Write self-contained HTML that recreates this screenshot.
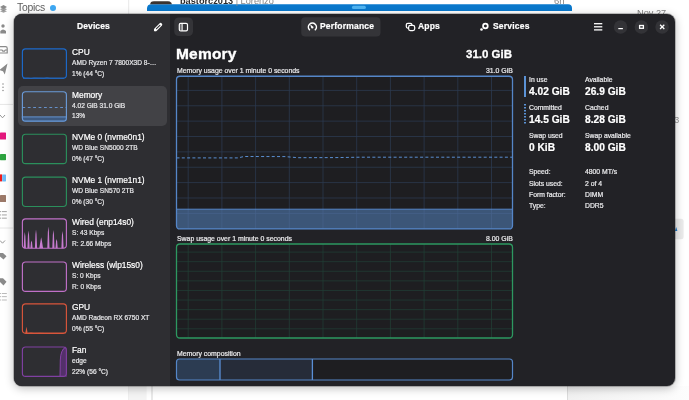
<!DOCTYPE html>
<html><head><meta charset="utf-8"><style>
html,body{margin:0;padding:0;-webkit-font-smoothing:antialiased;}
.gs{will-change:transform;}
body{width:689px;height:400px;position:relative;overflow:hidden;background:#ffffff;font-family:"Liberation Sans",sans-serif;}
.ov{position:absolute;left:0;top:0;}
.t{will-change:transform;position:absolute;white-space:nowrap;line-height:1;}
#win{position:absolute;left:14px;top:14px;width:661px;height:372px;border-radius:8px;background:#222226;overflow:hidden;box-shadow:0 0 0 1px rgba(0,0,0,0.22),0 2px 10px rgba(0,0,0,0.28);}
#side{position:absolute;left:0;top:0;width:156px;height:372px;background:#2e2e32;}
.nm{will-change:transform;-webkit-text-stroke:0.2px #fff;position:absolute;left:72px;font-size:8.4px;color:#fff;white-space:nowrap;line-height:10px;}
.sb{will-change:transform;-webkit-text-stroke:0.2px #e8e8ea;position:absolute;left:72px;font-size:6.6px;color:#e8e8ea;white-space:nowrap;line-height:8px;}
.lb{will-change:transform;-webkit-text-stroke:0.2px #ececee;position:absolute;font-size:6.8px;color:#ececee;white-space:nowrap;line-height:8px;}
.vl{will-change:transform;-webkit-text-stroke:0.2px #fff;position:absolute;font-size:10.2px;font-weight:bold;color:#fff;white-space:nowrap;line-height:12px;}
.hd{will-change:transform;-webkit-text-stroke:0.2px #fff;letter-spacing:0.2px;position:absolute;font-size:8.5px;font-weight:bold;color:#fff;white-space:nowrap;line-height:10px;}
</style></head><body>
<svg class="ov" width="689" height="400" viewBox="0 0 689 400"><path d="M147 11 L147 8.5 Q147 4.2 151.5 4.2 L568 4.2 Q572 4.2 572 8 L572 11 Z" fill="#0a78cc"/><rect x="351.9" y="5.8" width="14" height="3.2" rx="1.6" fill="#4fb3f0"/><path d="M150 4.2 L151 2 Q152 1.3 154 1.3 L168 1.3 Q170 1.3 171 2.5 L172 4.2 Z" fill="#3a3330"/><line x1="128.7" y1="0" x2="128.7" y2="400" stroke="#e8e8e8" stroke-width="1"/><rect x="128.6" y="386" width="18" height="14" fill="#f4f4f4"/><line x1="152" y1="386" x2="152" y2="400" stroke="#e2e2e2" stroke-width="1.5"/><line x1="567.5" y1="386" x2="567.5" y2="400" stroke="#dcdcdc" stroke-width="1"/><defs><linearGradient id="rg" x1="0" x2="1" y1="0" y2="0"><stop offset="0" stop-color="#f1f1f1"/><stop offset="0.4" stop-color="#f6f6f6"/><stop offset="1" stop-color="#fdfdfd"/></linearGradient></defs><rect x="568" y="386" width="121" height="14" fill="url(#rg)"/><g fill="#8a8a8a"><path d="M0 7 L3.5 5 L7 7 L3.5 9 Z"/><path d="M0 9.3 L3.5 7.3 L7 9.3 L3.5 11.3 Z" opacity="0.8"/><path d="M0 11.3 L3.5 9.8 L7 11.3 L3.5 12.8 Z" opacity="0.8"/></g><g fill="#8a8a8a"><circle cx="3" cy="26" r="1.7"/><path d="M0.3 33.5 L0.3 31 Q3 28 6 31 L6 33.5 Z"/></g><path d="M-1 46.6 L5.6 46.6 Q7.2 46.6 7.2 48.2 L7.2 53 L-1 53 Z M-1 50 L2 50 L2.8 51.2 L4.5 51.2 L5.3 50 L7.2 50" fill="none" stroke="#8a8a8a" stroke-width="1.2"/><path d="M-0.5 70 L7.5 63.5 L4.8 74.5 L3 71.2 Z" fill="#8a8a8a"/><g fill="#8a8a8a"><circle cx="3" cy="84" r="0.75"/><circle cx="3" cy="87.3" r="0.75"/><circle cx="3" cy="90.5" r="0.75"/></g><line x1="0" y1="104.4" x2="13" y2="104.4" stroke="#e6e6e6" stroke-width="1"/><path d="M0 115 L2.5 117.8 L5 115" stroke="#8a8a8a" stroke-width="0.9" fill="none"/><rect x="0" y="132.5" width="6" height="7" rx="0.6" fill="#e3177c"/><rect x="0" y="154" width="6" height="6.2" rx="0.6" fill="#2da33f"/><rect x="0" y="174.4" width="2.2" height="7" fill="#ee1a1a"/><rect x="2.2" y="174.4" width="3.8" height="7" rx="0.6" fill="#6cbaf5"/><rect x="0" y="195" width="6" height="7" rx="0.6" fill="#9b7868"/><g fill="#999"><rect x="0" y="211.2" width="1" height="0.9"/><rect x="1.8" y="211.2" width="5" height="0.9"/><rect x="0" y="214.5" width="1" height="0.9"/><rect x="1.8" y="214.5" width="5" height="0.9"/><rect x="0" y="217.7" width="1" height="0.9"/><rect x="1.8" y="217.7" width="5" height="0.9"/></g><line x1="0" y1="228" x2="13" y2="228" stroke="#e6e6e6" stroke-width="1"/><path d="M0 240.5 L2.5 243.2 L5 240.5" stroke="#8a8a8a" stroke-width="0.9" fill="none"/><path d="M0 253 L3 253 L6.5 256.2 L3.5 259.4 L0 256.5 Z" fill="#8a8a8a"/><path d="M0 278.3 L3 278.3 L6.5 281.8 L3.5 285.4 L0 282 Z" fill="#8a8a8a"/><g fill="#aaa"><rect x="0" y="293" width="1" height="0.8"/><rect x="1.8" y="293" width="5" height="0.8"/><rect x="0" y="296.3" width="1" height="0.8"/><rect x="1.8" y="296.3" width="5" height="0.8"/><rect x="0" y="299.6" width="1" height="0.8"/><rect x="1.8" y="299.6" width="5" height="0.8"/></g><rect x="665" y="218.7" width="18.6" height="20.6" rx="2.5" fill="#ebebeb"/><path d="M675 231 L676.2 227 L677.4 231 Z" fill="#1f7ac8"/></svg>
<div class="t" style="left:17.3px;top:3.2px;font-size:10.4px;letter-spacing:-0.25px;color:#606060;">Topics</div>
<div style="position:absolute;left:49.8px;top:5.1px;width:5.8px;height:5.8px;border-radius:50%;background:#3ea8f3"></div>
<div class="t" style="left:179.5px;top:-3.5px;font-size:9.2px;font-weight:bold;color:#2a2a2a;">bastorcz013 <span style="color:#888;font-weight:normal">| Lorenzo</span></div>
<div class="t" style="left:554px;top:-3.8px;font-size:9.5px;color:#888;">6h</div>
<div class="t" style="left:637px;top:8.6px;font-size:9.2px;color:#808080;">Nov 27</div>
<div class="t" style="left:674px;top:115.2px;font-size:9.5px;color:#999;">3</div>
<div id="win"><div id="side"></div>
<div style="position:absolute;left:3.5px;top:71.8px;width:149.8px;height:40.6px;border-radius:5px;background:#424246"></div>
</div>
<div style="position:absolute;left:0;top:0;width:689px;height:400px;">
<div class="nm" style="top:46.70px">CPU</div><div class="sb" style="top:59.00px">AMD Ryzen 7 7800X3D 8-…</div><div class="sb" style="top:69.50px">1% (44 °C)</div><div class="nm" style="top:89.60px">Memory</div><div class="sb" style="top:101.90px">4.02 GiB 31.0 GiB</div><div class="sb" style="top:112.40px">13%</div><div class="nm" style="top:132.10px">NVMe 0 (nvme0n1)</div><div class="sb" style="top:144.40px">WD Blue SN5000 2TB</div><div class="sb" style="top:154.90px">0% (47 °C)</div><div class="nm" style="top:175.00px">NVMe 1 (nvme1n1)</div><div class="sb" style="top:187.30px">WD Blue SN570 2TB</div><div class="sb" style="top:197.80px">0% (30 °C)</div><div class="nm" style="top:216.70px">Wired (enp14s0)</div><div class="sb" style="top:229.00px">S: 43 Kbps</div><div class="sb" style="top:239.50px">R: 2.66 Mbps</div><div class="nm" style="top:259.90px">Wireless (wlp15s0)</div><div class="sb" style="top:272.20px">S: 0 Kbps</div><div class="sb" style="top:282.70px">R: 0 Kbps</div><div class="nm" style="top:301.80px">GPU</div><div class="sb" style="top:314.10px">AMD Radeon RX 6750 XT</div><div class="sb" style="top:324.60px">0% (55 °C)</div><div class="nm" style="top:344.90px">Fan</div><div class="sb" style="top:357.20px">edge</div><div class="sb" style="top:367.70px">22% (56 °C)</div>
</div>
<svg class="ov" width="689" height="400" viewBox="0 0 689 400"><path d="M21.8 116.8 L67.0 116.8 L67.0 118.69999999999999 Q67.0 121.69999999999999 64.0 121.69999999999999 L24.8 121.69999999999999 Q21.8 121.69999999999999 21.8 118.69999999999999 Z" fill="#3e5a80"/><line x1="21.8" y1="116.9" x2="67.0" y2="116.9" stroke="#6a9ad8" stroke-width="0.9"/><line x1="22.400000000000002" y1="107.5" x2="67.0" y2="107.5" stroke="#6a9ad8" stroke-width="0.9" stroke-dasharray="2.8 2.6"/><path d="M23 78.3 L28 78.1 L31 78.4 L34 78 L44 78.2 L47 77.8 L50 78.2 L64 78.2" stroke="#2f80e0" stroke-width="0.7" fill="none"/><path d="M23.7 248.3 L24.25 236.07 L24.8 232 L25.35 236.07 L25.900000000000002 248.3 Z M27.4 248.3 L27.95 234.95 L28.5 230.5 L29.05 234.95 L29.6 248.3 Z M30.4 248.3 L30.95 242.45 L31.5 240.5 L32.05 242.45 L32.6 248.3 Z M34.9 248.3 L35.45 234.20 L36 229.5 L36.55 234.20 L37.1 248.3 Z M39.300000000000004 248.3 L40.650000000000006 239.97 L41.2 237.2 L41.75 239.97 L43.1 248.3 Z M47.3 248.3 L47.85 231.95 L48.4 226.5 L48.949999999999996 231.95 L49.5 248.3 Z M52.3 248.3 L52.85 234.57 L53.4 230 L53.949999999999996 234.57 L54.5 248.3 Z M55.5 248.3 L56.050000000000004 241.32 L56.6 239 L57.15 241.32 L57.7 248.3 Z M61.4 248.3 L61.95 235.32 L62.5 231 L63.05 235.32 L63.6 248.3 Z " fill="#c77ccf"/><path d="M25.3 333.3 L26.5 326.8 L27.7 333.3 Z" fill="#de5a3e"/><path d="M28 333 L31 332.6 L34 333 L40 332.8 L45 333 L66 333" stroke="#de5a3e" stroke-width="0.6" fill="none"/><path d="M60 377.0 L60.3 360 Q60.6 350 64.5 347.3 L66.5 347.4 L67.0 377.0 Z" fill="#53306a"/><path d="M60 377.0 L60.3 360 Q60.6 350 65.5 347.2" stroke="#8d45b0" stroke-width="0.9" fill="none"/><path d="M25.6 48.800000000000004 L63.2 48.800000000000004 Q66.4 48.800000000000004 66.4 52.00000000000001 L66.4 75.00000000000001 Q66.4 78.20000000000002 63.2 78.20000000000002 L25.6 78.20000000000002 Q22.400000000000002 78.20000000000002 22.400000000000002 75.00000000000001 L22.400000000000002 52.00000000000001 Q22.400000000000002 48.800000000000004 25.6 48.800000000000004 Z" fill="none" stroke="#1c6acb" stroke-width="1.15"/><path d="M25.6 91.69999999999999 L63.2 91.69999999999999 Q66.4 91.69999999999999 66.4 94.89999999999999 L66.4 117.89999999999999 Q66.4 121.1 63.2 121.1 L25.6 121.1 Q22.400000000000002 121.1 22.400000000000002 117.89999999999999 L22.400000000000002 94.89999999999999 Q22.400000000000002 91.69999999999999 25.6 91.69999999999999 Z" fill="none" stroke="#6a9ad8" stroke-width="1.15"/><path d="M25.6 134.2 L63.2 134.2 Q66.4 134.2 66.4 137.39999999999998 L66.4 160.4 Q66.4 163.6 63.2 163.6 L25.6 163.6 Q22.400000000000002 163.6 22.400000000000002 160.4 L22.400000000000002 137.39999999999998 Q22.400000000000002 134.2 25.6 134.2 Z" fill="none" stroke="#2b8f5c" stroke-width="1.15"/><path d="M25.6 177.1 L63.2 177.1 Q66.4 177.1 66.4 180.29999999999998 L66.4 203.3 Q66.4 206.5 63.2 206.5 L25.6 206.5 Q22.400000000000002 206.5 22.400000000000002 203.3 L22.400000000000002 180.29999999999998 Q22.400000000000002 177.1 25.6 177.1 Z" fill="none" stroke="#2b8f5c" stroke-width="1.15"/><path d="M25.6 218.79999999999998 L63.2 218.79999999999998 Q66.4 218.79999999999998 66.4 221.99999999999997 L66.4 245.0 Q66.4 248.2 63.2 248.2 L25.6 248.2 Q22.400000000000002 248.2 22.400000000000002 245.0 L22.400000000000002 221.99999999999997 Q22.400000000000002 218.79999999999998 25.6 218.79999999999998 Z" fill="none" stroke="#c070c8" stroke-width="1.15"/><path d="M25.6 262.0 L63.2 262.0 Q66.4 262.0 66.4 265.2 L66.4 288.2 Q66.4 291.4 63.2 291.4 L25.6 291.4 Q22.400000000000002 291.4 22.400000000000002 288.2 L22.400000000000002 265.2 Q22.400000000000002 262.0 25.6 262.0 Z" fill="none" stroke="#c070c8" stroke-width="1.15"/><path d="M25.6 303.90000000000003 L63.2 303.90000000000003 Q66.4 303.90000000000003 66.4 307.1 L66.4 330.1 Q66.4 333.3 63.2 333.3 L25.6 333.3 Q22.400000000000002 333.3 22.400000000000002 330.1 L22.400000000000002 307.1 Q22.400000000000002 303.90000000000003 25.6 303.90000000000003 Z" fill="none" stroke="#d9553b" stroke-width="1.15"/><path d="M25.6 347.0 L63.2 347.0 Q66.4 347.0 66.4 350.2 L66.4 373.2 Q66.4 376.4 63.2 376.4 L25.6 376.4 Q22.400000000000002 376.4 22.400000000000002 373.2 L22.400000000000002 350.2 Q22.400000000000002 347.0 25.6 347.0 Z" fill="none" stroke="#8040a2" stroke-width="1.15"/><path d="M180.0 76.25 L509.0 76.25 Q512.5 76.25 512.5 79.75 L512.5 225.4 Q512.5 228.9 509.0 228.9 L180.0 228.9 Q176.5 228.9 176.5 225.4 L176.5 79.75 Q176.5 76.25 180.0 76.25 Z" fill="#1e1e21"/><line x1="188.20" y1="76.25" x2="188.20" y2="228.9" stroke="#2c3b52" stroke-width="0.75"/><line x1="221.90" y1="76.25" x2="221.90" y2="228.9" stroke="#2c3b52" stroke-width="0.75"/><line x1="255.60" y1="76.25" x2="255.60" y2="228.9" stroke="#2c3b52" stroke-width="0.75"/><line x1="289.30" y1="76.25" x2="289.30" y2="228.9" stroke="#2c3b52" stroke-width="0.75"/><line x1="323.00" y1="76.25" x2="323.00" y2="228.9" stroke="#2c3b52" stroke-width="0.75"/><line x1="356.70" y1="76.25" x2="356.70" y2="228.9" stroke="#2c3b52" stroke-width="0.75"/><line x1="390.40" y1="76.25" x2="390.40" y2="228.9" stroke="#2c3b52" stroke-width="0.75"/><line x1="424.10" y1="76.25" x2="424.10" y2="228.9" stroke="#2c3b52" stroke-width="0.75"/><line x1="457.80" y1="76.25" x2="457.80" y2="228.9" stroke="#2c3b52" stroke-width="0.75"/><line x1="491.50" y1="76.25" x2="491.50" y2="228.9" stroke="#2c3b52" stroke-width="0.75"/><line x1="176.5" y1="90.40" x2="512.5" y2="90.40" stroke="#2c3b52" stroke-width="0.75"/><line x1="176.5" y1="105.77" x2="512.5" y2="105.77" stroke="#2c3b52" stroke-width="0.75"/><line x1="176.5" y1="121.14" x2="512.5" y2="121.14" stroke="#2c3b52" stroke-width="0.75"/><line x1="176.5" y1="136.51" x2="512.5" y2="136.51" stroke="#2c3b52" stroke-width="0.75"/><line x1="176.5" y1="151.88" x2="512.5" y2="151.88" stroke="#2c3b52" stroke-width="0.75"/><line x1="176.5" y1="167.25" x2="512.5" y2="167.25" stroke="#2c3b52" stroke-width="0.75"/><line x1="176.5" y1="182.62" x2="512.5" y2="182.62" stroke="#2c3b52" stroke-width="0.75"/><line x1="176.5" y1="197.99" x2="512.5" y2="197.99" stroke="#2c3b52" stroke-width="0.75"/><path d="M176.5 209.2 L512.5 209.2 L512.5 224.9 Q512.5 228.9 508.5 228.9 L180.5 228.9 Q176.5 228.9 176.5 224.9 Z" fill="#3c5678"/><line x1="188.20" y1="209.2" x2="188.20" y2="228.9" stroke="#46628a" stroke-width="0.75"/><line x1="221.90" y1="209.2" x2="221.90" y2="228.9" stroke="#46628a" stroke-width="0.75"/><line x1="255.60" y1="209.2" x2="255.60" y2="228.9" stroke="#46628a" stroke-width="0.75"/><line x1="289.30" y1="209.2" x2="289.30" y2="228.9" stroke="#46628a" stroke-width="0.75"/><line x1="323.00" y1="209.2" x2="323.00" y2="228.9" stroke="#46628a" stroke-width="0.75"/><line x1="356.70" y1="209.2" x2="356.70" y2="228.9" stroke="#46628a" stroke-width="0.75"/><line x1="390.40" y1="209.2" x2="390.40" y2="228.9" stroke="#46628a" stroke-width="0.75"/><line x1="424.10" y1="209.2" x2="424.10" y2="228.9" stroke="#46628a" stroke-width="0.75"/><line x1="457.80" y1="209.2" x2="457.80" y2="228.9" stroke="#46628a" stroke-width="0.75"/><line x1="491.50" y1="209.2" x2="491.50" y2="228.9" stroke="#46628a" stroke-width="0.75"/><line x1="176.5" y1="213.4" x2="512.5" y2="213.4" stroke="#46628a" stroke-width="0.75"/><line x1="176.5" y1="209.2" x2="512.5" y2="209.2" stroke="#5586c8" stroke-width="1"/><path d="M176.5 157.9 L238 157.9 L244 156.5 L285 156.6 L298 157.7 L335 157.6 L360 157.2 L512.5 157.2" fill="none" stroke="#5a8fd2" stroke-width="1.0" stroke-dasharray="3 2.3"/><path d="M180.0 76.25 L509.0 76.25 Q512.5 76.25 512.5 79.75 L512.5 225.4 Q512.5 228.9 509.0 228.9 L180.0 228.9 Q176.5 228.9 176.5 225.4 L176.5 79.75 Q176.5 76.25 180.0 76.25 Z" fill="none" stroke="#5586c8" stroke-width="1.3"/><path d="M180.0 244 L509.0 244 Q512.5 244 512.5 247.5 L512.5 334.5 Q512.5 338.0 509.0 338.0 L180.0 338.0 Q176.5 338.0 176.5 334.5 L176.5 247.5 Q176.5 244 180.0 244 Z" fill="#1e1e21"/><line x1="188.20" y1="244" x2="188.20" y2="338.0" stroke="#223f36" stroke-width="0.75"/><line x1="221.90" y1="244" x2="221.90" y2="338.0" stroke="#223f36" stroke-width="0.75"/><line x1="255.60" y1="244" x2="255.60" y2="338.0" stroke="#223f36" stroke-width="0.75"/><line x1="289.30" y1="244" x2="289.30" y2="338.0" stroke="#223f36" stroke-width="0.75"/><line x1="323.00" y1="244" x2="323.00" y2="338.0" stroke="#223f36" stroke-width="0.75"/><line x1="356.70" y1="244" x2="356.70" y2="338.0" stroke="#223f36" stroke-width="0.75"/><line x1="390.40" y1="244" x2="390.40" y2="338.0" stroke="#223f36" stroke-width="0.75"/><line x1="424.10" y1="244" x2="424.10" y2="338.0" stroke="#223f36" stroke-width="0.75"/><line x1="457.80" y1="244" x2="457.80" y2="338.0" stroke="#223f36" stroke-width="0.75"/><line x1="491.50" y1="244" x2="491.50" y2="338.0" stroke="#223f36" stroke-width="0.75"/><line x1="176.5" y1="252.10" x2="512.5" y2="252.10" stroke="#223f36" stroke-width="0.75"/><line x1="176.5" y1="261.69" x2="512.5" y2="261.69" stroke="#223f36" stroke-width="0.75"/><line x1="176.5" y1="271.28" x2="512.5" y2="271.28" stroke="#223f36" stroke-width="0.75"/><line x1="176.5" y1="280.87" x2="512.5" y2="280.87" stroke="#223f36" stroke-width="0.75"/><line x1="176.5" y1="290.46" x2="512.5" y2="290.46" stroke="#223f36" stroke-width="0.75"/><line x1="176.5" y1="300.05" x2="512.5" y2="300.05" stroke="#223f36" stroke-width="0.75"/><line x1="176.5" y1="309.64" x2="512.5" y2="309.64" stroke="#223f36" stroke-width="0.75"/><line x1="176.5" y1="319.23" x2="512.5" y2="319.23" stroke="#223f36" stroke-width="0.75"/><line x1="176.5" y1="328.82" x2="512.5" y2="328.82" stroke="#223f36" stroke-width="0.75"/><path d="M180.0 244 L509.0 244 Q512.5 244 512.5 247.5 L512.5 334.5 Q512.5 338.0 509.0 338.0 L180.0 338.0 Q176.5 338.0 176.5 334.5 L176.5 247.5 Q176.5 244 180.0 244 Z" fill="none" stroke="#2d9860" stroke-width="1.3"/><path d="M179.5 359 L509.5 359 Q512.5 359 512.5 362 L512.5 377 Q512.5 380 509.5 380 L179.5 380 Q176.5 380 176.5 377 L176.5 362 Q176.5 359 179.5 359 Z" fill="#1e1e21"/><path d="M179.5 359 L220 359 L220 380 L179.5 380 Q176.5 380 176.5 377 L176.5 362 Q176.5 359 179.5 359 Z" fill="#2c3c52"/><rect x="220" y="359" width="92.4" height="21" fill="#262c39"/><line x1="220" y1="359" x2="220" y2="380" stroke="#5a8fd6" stroke-width="1.3"/><line x1="312.4" y1="359" x2="312.4" y2="380" stroke="#5a8fd6" stroke-width="1.3"/><path d="M179.5 359 L509.5 359 Q512.5 359 512.5 362 L512.5 377 Q512.5 380 509.5 380 L179.5 380 Q176.5 380 176.5 377 L176.5 362 Q176.5 359 179.5 359 Z" fill="none" stroke="#5586c8" stroke-width="1.2"/><line x1="525" y1="76" x2="525" y2="97" stroke="#62a0ea" stroke-width="1.8"/><line x1="525" y1="104" x2="525" y2="125" stroke="#62a0ea" stroke-width="1.8" stroke-dasharray="1.5 1.5"/><line x1="155.6" y1="29.6" x2="160.6" y2="24.6" stroke="#fff" stroke-width="3.3" stroke-linecap="round"/><line x1="156.5" y1="28.7" x2="159.9" y2="25.3" stroke="#2e2e32" stroke-width="1.1" stroke-linecap="round"/><path d="M153.9 31.2 L154.2 29 L156.1 30.9 Z" fill="#fff"/><rect x="174.2" y="17.4" width="18.8" height="18.6" rx="4.5" fill="#343438"/><rect x="179.3" y="23.4" width="8.2" height="7.4" rx="1.4" fill="none" stroke="#fff" stroke-width="1.2"/><rect x="180" y="24" width="1.5" height="6.2" fill="#6a6a6e"/><line x1="182.1" y1="23.4" x2="182.1" y2="30.8" stroke="#fff" stroke-width="1.1"/><rect x="301.2" y="17.2" width="79.3" height="19.3" rx="4" fill="#343438"/><g stroke="#fff" stroke-width="1.55" fill="none" stroke-linecap="round"><path d="M309.5 29.8 A4 4 0 1 1 315.3 29.8"/></g><line x1="312.2" y1="27.4" x2="311" y2="25.6" stroke="#fff" stroke-width="1.2" stroke-linecap="round"/><circle cx="312.3" cy="27.4" r="1.15" fill="#fff"/><g stroke="#fff" stroke-width="1.25" fill="none"><rect x="406.3" y="23.3" width="5.6" height="4.8" rx="1.5"/><rect x="408.6" y="25.4" width="6.1" height="5.2" rx="1.8" fill="#222226"/></g><circle cx="485.4" cy="26" r="2.35" fill="none" stroke="#fff" stroke-width="1.7"/><circle cx="481.5" cy="29.5" r="1.3" fill="#fff"/><g stroke="#fff" stroke-width="1.3"><line x1="594" y1="23.7" x2="602.3" y2="23.7"/><line x1="594" y1="26.8" x2="602.3" y2="26.8"/><line x1="594" y1="29.9" x2="602.3" y2="29.9"/></g><circle cx="620.6" cy="27" r="6.8" fill="#333337"/><circle cx="641.4" cy="27" r="6.8" fill="#333337"/><circle cx="662.1" cy="27" r="6.8" fill="#333337"/><line x1="618.3" y1="28.6" x2="622.9" y2="28.6" stroke="#fff" stroke-width="1.2"/><rect x="639.6" y="25.5" width="3.8" height="2.8" fill="none" stroke="#fff" stroke-width="1.3"/><g stroke="#fff" stroke-width="1.25"><line x1="660.1" y1="24.8" x2="664.3" y2="29"/><line x1="664.3" y1="24.8" x2="660.1" y2="29"/></g></svg>
<div class="hd" style="left:76.5px;top:20.9px;letter-spacing:0.1px;">Devices</div>
<div class="hd" style="left:320.3px;top:21.1px;">Performance</div>
<div class="hd" style="left:418px;top:21.1px;">Apps</div>
<div class="hd" style="left:492.5px;top:21.1px;">Services</div>
<div class="t" style="left:176.2px;top:45.7px;font-size:15.5px;font-weight:bold;color:#fff;-webkit-text-stroke:0.35px #fff;letter-spacing:0.2px;">Memory</div>
<div class="t" style="right:176.5px;top:48.5px;font-size:11.5px;font-weight:bold;color:#fff;-webkit-text-stroke:0.3px #fff;">31.0 GiB</div>
<div class="lb" style="left:176.5px;top:66.5px;font-size:6.9px;">Memory usage over 1 minute 0 seconds</div>
<div class="lb" style="right:176.5px;top:66.5px;font-size:6.9px;">31.0 GiB</div>
<div class="lb" style="left:176.5px;top:234.5px;font-size:6.9px;">Swap usage over 1 minute 0 seconds</div>
<div class="lb" style="right:176.5px;top:234.5px;font-size:6.9px;">8.00 GiB</div>
<div class="lb" style="left:176.5px;top:349.8px;font-size:6.9px;">Memory composition</div>
<div class="lb" style="left:529px;top:76px;">In use</div>
<div class="lb" style="left:584.7px;top:76px;">Available</div>
<div class="vl" style="left:529px;top:85.5px;">4.02 GiB</div>
<div class="vl" style="left:584.7px;top:85.5px;">26.9 GiB</div>
<div class="lb" style="left:529px;top:104.2px;">Committed</div>
<div class="lb" style="left:584.7px;top:104.2px;">Cached</div>
<div class="vl" style="left:529px;top:113.6px;">14.5 GiB</div>
<div class="vl" style="left:584.7px;top:113.6px;">8.28 GiB</div>
<div class="lb" style="left:529px;top:132.2px;">Swap used</div>
<div class="lb" style="left:584.7px;top:132.2px;">Swap available</div>
<div class="vl" style="left:529px;top:142.1px;">0 KiB</div>
<div class="vl" style="left:584.7px;top:142.1px;">8.00 GiB</div>
<div class="lb" style="left:529px;top:167.8px;">Speed:</div>
<div class="lb" style="left:584.7px;top:167.8px;">4800 MT/s</div>
<div class="lb" style="left:529px;top:179.5px;">Slots used:</div>
<div class="lb" style="left:584.7px;top:179.5px;">2 of 4</div>
<div class="lb" style="left:529px;top:191.1px;">Form factor:</div>
<div class="lb" style="left:584.7px;top:191.1px;">DIMM</div>
<div class="lb" style="left:529px;top:202.4px;">Type:</div>
<div class="lb" style="left:584.7px;top:202.4px;">DDR5</div>
</body></html>
